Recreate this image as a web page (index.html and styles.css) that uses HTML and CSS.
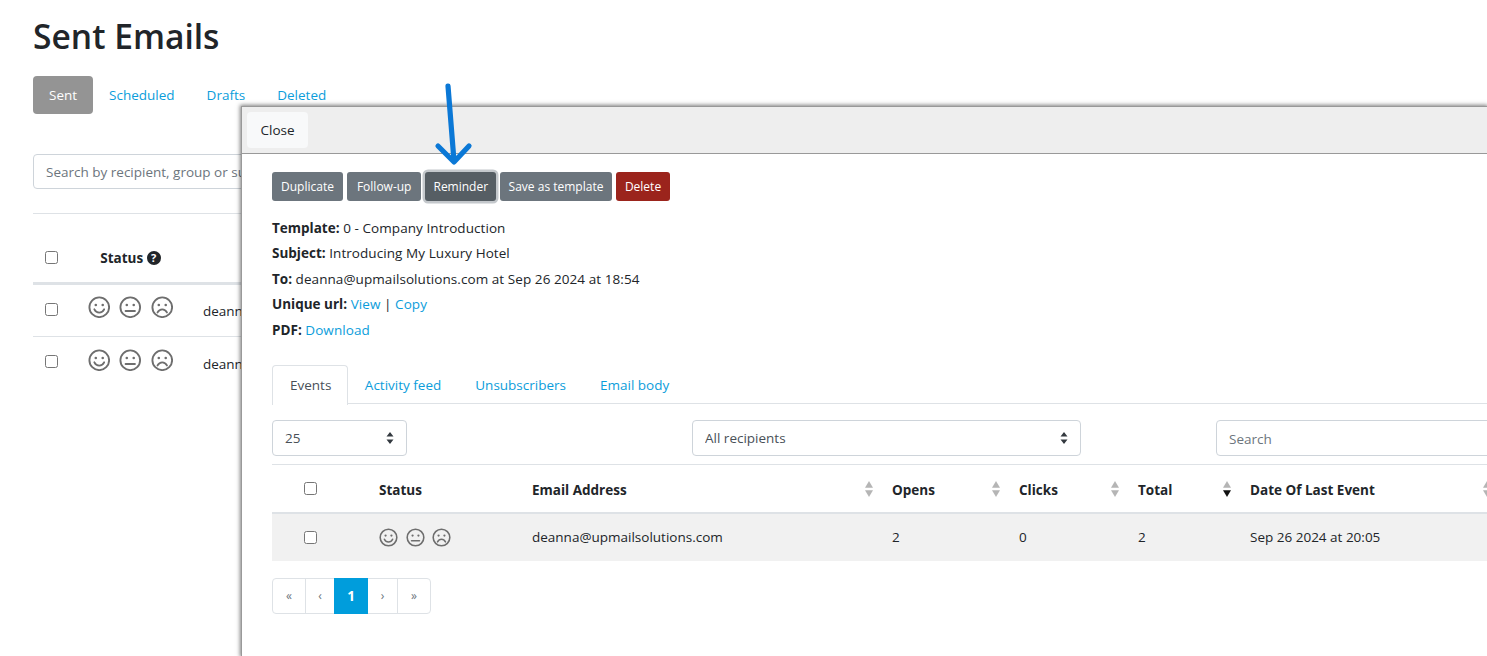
FILE: index.html
```html
<!DOCTYPE html>
<html lang="en">
<head>
<meta charset="utf-8">
<title>Sent Emails</title>
<link rel="stylesheet" href="styles.css">
</head>
<body>
<svg class="defs" width="0" height="0" aria-hidden="true">
  <defs>
    <g id="eyes"><circle cx="8.3" cy="9.6" r="1.4" fill="#6e6e6e"/><circle cx="15.7" cy="9.6" r="1.4" fill="#6e6e6e"/></g>
    <symbol id="happy" viewBox="0 0 24 24"><circle cx="12" cy="12" r="10.5" fill="none" stroke="#6e6e6e" stroke-width="2"/><use href="#eyes"/><path d="M6.8 14.2c1.2 2.4 3 3.5 5.2 3.5s4-1.1 5.2-3.500" fill="none" stroke="#6e6e6e" stroke-width="2" stroke-linecap="round"/></symbol>
    <symbol id="neutral" viewBox="0 0 24 24"><circle cx="12" cy="12" r="10.5" fill="none" stroke="#6e6e6e" stroke-width="2"/><use href="#eyes"/><path d="M7 16h10" fill="none" stroke="#6e6e6e" stroke-width="2" stroke-linecap="round"/></symbol>
    <symbol id="sad" viewBox="0 0 24 24"><circle cx="12" cy="12" r="10.5" fill="none" stroke="#6e6e6e" stroke-width="2"/><use href="#eyes"/><path d="M7 17.5c1.2-2.3 3-3.3 5-3.3s3.800 1 5 3.300" fill="none" stroke="#6e6e6e" stroke-width="2" stroke-linecap="round"/></symbol>
    <symbol id="sort" viewBox="0 0 10 18"><path d="M5 0l4.500 7.500H.5z" fill="#b5b5b5"/><path d="M5 18L.5 10.500h9z" fill="#b5b5b5"/></symbol>
    <symbol id="sort-desc" viewBox="0 0 10 18"><path d="M5 0l4.500 7.500H.5z" fill="#b5b5b5"/><path d="M5 18L.5 10.500h9z" fill="#111"/></symbol>
  </defs>
</svg>

<main class="page">
  <h1 class="title">Sent Emails</h1>
  <nav class="pills">
    <a class="pill active" href="#">Sent</a>
    <a class="pill" href="#">Scheduled</a>
    <a class="pill" href="#">Drafts</a>
    <a class="pill" href="#">Deleted</a>
  </nav>
  <input class="field main-search" type="text" placeholder="Search by recipient, group or subject">
  <hr class="main-rule">
  <table class="main-table">
    <thead>
      <tr>
        <th class="mc-check"><input type="checkbox"></th>
        <th class="mc-status">Status <span class="help">?</span></th>
        <th class="mc-to"></th>
      </tr>
    </thead>
    <tbody>
      <tr>
        <td class="mc-check"><input type="checkbox"></td>
        <td class="mc-status"><span class="faces"><svg><use href="#happy"/></svg><svg><use href="#neutral"/></svg><svg><use href="#sad"/></svg></span></td>
        <td class="mc-to">deanna</td>
      </tr>
      <tr>
        <td class="mc-check"><input type="checkbox"></td>
        <td class="mc-status"><span class="faces"><svg><use href="#happy"/></svg><svg><use href="#neutral"/></svg><svg><use href="#sad"/></svg></span></td>
        <td class="mc-to">deanna</td>
      </tr>
    </tbody>
  </table>
</main>

<aside class="panel">
  <header class="panel-head"><button class="close" type="button">Close</button></header>
  <div class="panel-body">
    <div class="actions">
      <button class="btn" type="button">Duplicate</button>
      <button class="btn wide" type="button">Follow-up</button>
      <button class="btn focused" type="button">Reminder</button>
      <button class="btn tight" type="button">Save as template</button>
      <button class="btn danger" type="button">Delete</button>
    </div>
    <div class="details">
      <p><b>Template:</b> 0 - Company Introduction</p>
      <p><b>Subject:</b> Introducing My Luxury Hotel</p>
      <p><b>To:</b> deanna@upmailsolutions.com at Sep 26 2024 at 18:54</p>
      <p><b>Unique url:</b> <a href="#">View</a> | <a href="#">Copy</a></p>
      <p><b>PDF:</b> <a href="#">Download</a></p>
    </div>
    <nav class="tabs">
      <a class="tab active" href="#">Events</a>
      <a class="tab" href="#">Activity feed</a>
      <a class="tab" href="#">Unsubscribers</a>
      <a class="tab" href="#">Email body</a>
    </nav>
    <div class="filters">
      <select class="field select size"><option>25</option></select>
      <select class="field select recipients"><option>All recipients</option></select>
      <input class="field search" type="text" placeholder="Search">
    </div>
    <table class="events">
      <colgroup>
        <col class="c1"><col class="c2"><col class="c3"><col class="c4"><col class="c5"><col class="c6"><col class="c7">
      </colgroup>
      <thead>
        <tr>
          <th class="check"><input type="checkbox"></th>
          <th>Status</th>
          <th>Email Address<svg class="sort"><use href="#sort"/></svg></th>
          <th>Opens<svg class="sort"><use href="#sort"/></svg></th>
          <th>Clicks<svg class="sort"><use href="#sort"/></svg></th>
          <th>Total<svg class="sort"><use href="#sort-desc"/></svg></th>
          <th>Date Of Last Event<svg class="sort"><use href="#sort"/></svg></th>
        </tr>
      </thead>
      <tbody>
        <tr>
          <td class="check"><input type="checkbox"></td>
          <td class="face-cell"><span class="faces small"><svg><use href="#happy"/></svg><svg><use href="#neutral"/></svg><svg><use href="#sad"/></svg></span></td>
          <td>deanna@upmailsolutions.com</td>
          <td>2</td>
          <td>0</td>
          <td>2</td>
          <td>Sep 26 2024 at 20:05</td>
        </tr>
      </tbody>
    </table>
    <nav class="pager">
      <a href="#">«</a><a href="#">‹</a><a class="current" href="#">1</a><a href="#">›</a><a href="#">»</a>
    </nav>
  </div>
</aside>

<svg class="arrow" width="44" height="84" viewBox="0 0 44 84" aria-hidden="true">
  <path d="M16 3l6 75M6 63l16 16 15-16" fill="none" stroke="#0b78d6" stroke-width="5.200" stroke-linecap="round" stroke-linejoin="round"/>
</svg>
</body>
</html>
```
FILE: styles.css
```css
* { box-sizing: border-box; }
html, body { height: 100%; }
body {
  margin: 0;
  overflow: hidden;
  background: #fff;
  color: #212529;
  font: 13.5px/20px "Open Sans", "Noto Sans", sans-serif;
}
a { color: #0b9ddb; text-decoration: none; }
.defs { position: absolute; }

/* Page behind the overlay */
.page { padding: 14px 0 0 33px; width: 1454px; }
.title { margin: 0 0 17px; font-size: 33.6px; line-height: 45px; font-weight: 600; }
.pills { display: flex; height: 38px; }
.pill { display: flex; align-items: center; padding: 0 16px; border-radius: 4px; }
.pill.active { background: #949494; color: #fff; }
.field {
  height: 36px;
  padding: 0 12px;
  border: 1px solid #ced4da;
  border-radius: 4px;
  background-color: #fff;
  color: #495057;
  font: inherit;
}
.field::placeholder { color: #6c757d; opacity: 1; }
.main-search { display: block; width: 228px; height: 35px; margin-top: 40px; padding-top: 1px; }
.main-rule { margin: 24px 0 0; width: 215px; border: 0; border-top: 1px solid #dee2e6; }
.main-table { width: 210px; border-collapse: collapse; table-layout: fixed; }
.main-table th { height: 69px; padding: 19px 0 0; border-bottom: 3px solid #dee2e6; font-weight: 700; text-align: left; }
.main-table td { height: 53px; border-bottom: 1px solid #dee2e6; padding: 0; }
.main-table tr:last-child td { border-bottom: 0; }
.mc-check { width: 36px; }
.main-table .mc-check { padding-left: 12px; }
.main-table td.mc-check { padding-bottom: 2px; }
.mc-check input, .events .check input { display: block; margin: 0; }
.mc-status { width: 123px; }
.main-table .mc-status { text-align: center; }
.main-table th.mc-status { padding-top: 21px; }
.main-table td.mc-to { padding: 2px 0 0 11px; white-space: nowrap; }
.help {
  display: inline-block;
  width: 14px;
  height: 14px;
  margin-left: 0;
  border-radius: 50%;
  background: #212529;
  color: #fff;
  font-size: 11px;
  line-height: 14px;
  text-align: center;
  vertical-align: 1px;
}
.faces { display: inline-flex; gap: 9px; vertical-align: 1px; }
.faces svg { width: 22.500px; height: 22.500px; display: block; }
.faces.small { display: flex; gap: 7.500px; }
.faces.small svg { width: 19px; height: 19px; }

/* Overlay panel */
.panel {
  position: absolute;
  top: 106px;
  left: 241px;
  right: 0;
  bottom: 0;
  overflow: hidden;
  background: #fff;
  border: 1px solid #999;
  border-width: 1px 0 0 1px;
  box-shadow: 0 0 4px 1px rgba(0, 0, 0, .5);
}
.panel-head { height: 47px; padding: 5px; background: #eee; border-bottom: 1px solid #999; }
.close {
  display: block;
  height: 36px;
  width: 61px;
  padding: 0;
  border: 0;
  border-radius: 4px;
  background: #f8f9fa;
  color: #212529;
  font: inherit;
}
.panel-body { padding: 18px 0 0 30px; }
.actions { display: flex; gap: 4px; }
.btn {
  height: 29px;
  padding: 0 9px;
  border: 0;
  border-radius: 3px;
  background: #6c757d;
  color: #fff;
  font: 12px/29px "Open Sans", "Noto Sans", sans-serif;
}
.btn.wide { padding: 0 10px; }
.btn.tight { padding: 0 8.500px; }
.btn.focused { padding: 0 8px; background: #565e64; box-shadow: 0 0 0 2.500px #c4c8cc; }
.btn.danger { background: #9b241c; }
.details { margin-top: 14.500px; letter-spacing: .07px; }
.details p { margin: 0; line-height: 25.500px; }
.details b { font-weight: 700; letter-spacing: 0; }
.tabs { display: flex; margin-top: 22px; height: 39px; border-bottom: 1px solid #dee2e6; }
.tab { display: flex; align-items: center; padding: 0 17px; height: 39px; }
.tab.active {
  height: 40px;
  padding: 0 15.500px 2px 17px;
  color: #495057;
  background: #fff;
  border: 1px solid #dee2e6;
  border-bottom: 0;
  border-radius: 4px 4px 0 0;
}
.filters { display: flex; margin-top: 16px; padding-bottom: 8px; border-bottom: 1px solid #dee2e6; }
.filters .field { flex: none; }
.select {
  appearance: none;
  background-image: url("data:image/svg+xml,%3Csvg xmlns='http://www.w3.org/2000/svg' viewBox='0 0 8 12'%3E%3Cpath d='M4 0l3.500 4.500H.5zM4 12L.5 7.500h7z' fill='%23343a40'/%3E%3C/svg%3E");
  background-repeat: no-repeat;
  background-position: right 12px center;
  background-size: 8px 12px;
}
.size { width: 135px; }
.recipients { width: 389px; margin-left: 285px; }
.search { width: 400px; margin-left: 135px; padding-top: 1px; }
.events { width: 1226px; border-collapse: collapse; table-layout: fixed; }
.c1 { width: 95px; } .c2 { width: 153px; } .c3 { width: 360px; } .c4 { width: 127px; }
.c5 { width: 119px; } .c6 { width: 112px; } .c7 { width: 260px; }
.events th {
  position: relative;
  height: 48px;
  padding: 2px 12px 0;
  border-bottom: 2px solid #dee2e6;
  font-weight: 700;
  text-align: left;
}
.events td { height: 48px; padding: 0 12px 2px; background: #f1f1f1; }
.events .face-cell { padding-bottom: 1px; }
.events .check { padding: 0 0 0 32px; }
.sort { position: absolute; right: 6px; top: 16px; width: 10px; height: 16px; }
.pager { display: inline-flex; margin-top: 17px; border: 1px solid #dee2e6; border-radius: 4px; height: 36px; }
.pager a {
  display: flex;
  align-items: center;
  justify-content: center;
  width: 33px;
  margin: -1px 0;
  color: #6c757d;
  font-size: 12px;
  border-left: 1px solid #dee2e6;
}
.pager a:first-child { border-left: 0; width: 32px; }
.pager a:nth-child(2) { width: 29px; }
.pager a:nth-child(4) { width: 29px; border-left: 0; }
.pager a.current { width: 34px; background: #009ddc; border-left: 0; color: #fff; font-weight: 700; font-size: 13.500px; }

/* Annotation drawn over the screenshot */
.arrow { position: absolute; left: 432px; top: 83px; }
```
